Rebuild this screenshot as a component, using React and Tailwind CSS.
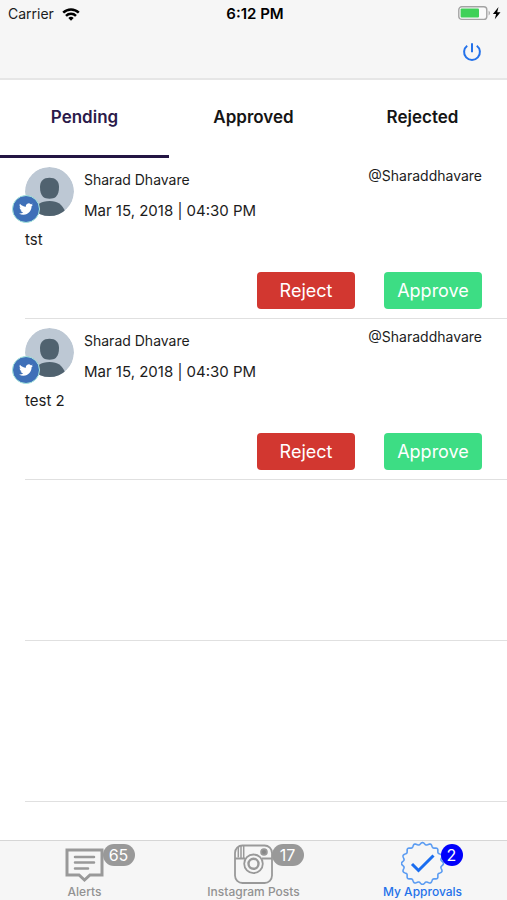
import { useState } from 'react';

const posts = [
  { id: 1, name: 'Sharad Dhavare', handle: '@Sharaddhavare', date: 'Mar 15, 2018 | 04:30 PM', text: 'tst' },
  { id: 2, name: 'Sharad Dhavare', handle: '@Sharaddhavare', date: 'Mar 15, 2018 | 04:30 PM', text: 'test 2' },
];

const tabs = ['Pending', 'Approved', 'Rejected'];

// Outline of the seal: a circle whose radius ripples sixteen times.
const sealPath =
  Array.from({ length: 192 }, (_, i) => {
    const a = (i / 192) * Math.PI * 2 - Math.PI / 2;
    const r = 19.9 + 1.1 * Math.cos((i / 192) * Math.PI * 32);
    return `${i ? 'L' : 'M'}${(21.5 + r * Math.cos(a)).toFixed(2)} ${(22.5 + r * Math.sin(a)).toFixed(2)}`;
  }).join('') + 'Z';

function WifiIcon() {
  return (
    <svg viewBox="0 0 18 13" className="h-[13px] w-[18px]" fill="none" stroke="#000" strokeWidth="2.5" aria-hidden="true">
      <path d="M1.2 4.7a11.2 11.2 0 0 1 15.6 0" />
      <path d="M4 7.8a7.2 7.2 0 0 1 10 0" />
      <path d="M9 12.8 6.3 10a3.9 3.9 0 0 1 5.4 0z" fill="#000" stroke="none" />
    </svg>
  );
}

function BatteryIcon() {
  return (
    <svg viewBox="0 0 44 16" className="h-4 w-11" aria-hidden="true">
      <rect x="0.8" y="0.8" width="28" height="12.6" rx="3" fill="#fafafa" stroke="#a3a3a3" strokeWidth="1.4" />
      <rect x="2.600" y="2.600" width="18.400" height="9" rx="1" fill="#3fd158" />
      <path d="M30.6 4.8c1.7.6 1.7 4 0 4.6z" fill="#a3a3a3" />
      <path d="M40.500 1 34.900 8h3.200l-1.300 5.200 5.700-7h-3.300z" fill="#000" />
    </svg>
  );
}

function PowerIcon() {
  return (
    <svg viewBox="0 0 20 20" className="size-5" fill="none" stroke="#2472ea" strokeWidth="2" aria-hidden="true">
      <path d="M10 1.200v9" />
      <path d="M5.200 3.800a7.900 7.900 0 1 0 9.600 0" />
    </svg>
  );
}

function Avatar() {
  return (
    <div className="relative size-[49px] shrink-0">
      <svg viewBox="0 0 49 49" className="size-[49px] rounded-full" aria-hidden="true">
        <circle cx="24.5" cy="24.5" r="24.5" fill="#bdc8d4" />
        <path d="M24.500 10.700c6 0 9.500 3.300 9.500 9.300 0 4-.7 7.500-3 9.800-1.600 1.400-3.800 1.900-6.500 1.900s-4.900-.5-6.500-1.900c-2.300-2.300-3-5.800-3-9.800 0-6 3.500-9.300 9.500-9.300z" fill="#50626f" />
        <path d="M9 45c1.500-7.500 7-11 15.700-11 8.300 0 12.300 3.500 15.300 10-4 7-26.500 8-31 1z" fill="#50626f" />
      </svg>
      <span className="absolute -bottom-[7px] -left-[13px] flex size-[28px] items-center justify-center rounded-full border border-[#a5e6dc] bg-[#3f70b8]">
        <svg viewBox="0 0 24 24" className="size-[14px]" fill="#fff" aria-label="Twitter">
          <path d="M23.95 4.57a10 10 0 0 1-2.820.780 4.960 4.960 0 0 0 2.160-2.720c-.950.560-2 .960-3.120 1.180a4.920 4.920 0 0 0-8.380 4.480C7.690 8.100 4.070 6.130 1.640 3.160a4.820 4.820 0 0 0-.670 2.480c0 1.710.870 3.210 2.190 4.100a4.900 4.900 0 0 1-2.230-.620v.060a4.920 4.920 0 0 0 3.950 4.830 5 5 0 0 1-2.210.080 4.940 4.940 0 0 0 4.600 3.420A9.870 9.870 0 0 1 0 19.540a14 14 0 0 0 7.550 2.210c9.050 0 14-7.500 14-13.990 0-.210 0-.420-.020-.630a9.940 9.940 0 0 0 2.460-2.550z" />
        </svg>
      </span>
    </div>
  );
}

function PostRow({ post }) {
  return (
    <li className="ml-[25px] flex h-[161px] flex-col border-b border-[#e0e0e0] pt-[9px] pr-[25px]">
      <div className="flex">
        <Avatar />
        <div className="ml-2.5 flex flex-1 flex-col gap-[11px] pt-[3px] leading-5">
          <p className="text-sm">{post.name}</p>
          <p className="text-[15px]">{post.date}</p>
        </div>
        <p className="text-sm leading-[18px]">{post.handle}</p>
      </div>
      <p className="mt-[9px] text-[15px] leading-5">{post.text}</p>
      <div className="mt-[22px] flex justify-end gap-[29px] text-lg text-white">
        <button type="button" className="h-[37px] w-[98px] rounded bg-[#d23730]">Reject</button>
        <button type="button" className="h-[37px] w-[98px] rounded bg-[#3ddd84]">Approve</button>
      </div>
    </li>
  );
}

function AlertsIcon() {
  return (
    <svg viewBox="0 0 44 44" className="size-11" fill="none" stroke="#999" aria-hidden="true">
      <path d="M4 9h35v25h-12l-5.500 5-5.500-5H4z" strokeWidth="3" />
      <path d="M12 16h19M12 21.500h19M12 27.500h13" strokeWidth="2.500" strokeLinecap="round" />
    </svg>
  );
}

function InstagramIcon() {
  return (
    <svg viewBox="0 0 44 44" className="size-11" fill="none" stroke="#999" strokeWidth="1.800" aria-hidden="true">
      <rect x="3" y="4.500" width="37" height="37.500" rx="7.500" />
      <path d="M3 17.500h10.200M29.800 17.500H40" />
      <path d="M6.300 6v10.500M9 5v12M11.700 5v12" strokeWidth="1.500" />
      <circle cx="32" cy="11" r="2.900" fill="#888" />
      <circle cx="21.500" cy="22.800" r="9.300" />
      <circle cx="21.500" cy="22.800" r="5" strokeWidth="2.400" />
    </svg>
  );
}

function ApprovalsIcon() {
  return (
    <svg viewBox="0 0 44 44" className="size-11" fill="none" aria-hidden="true">
      <path d={sealPath} stroke="#5b9cf2" strokeWidth="1.600" strokeLinejoin="round" />
      <path d="M11 23l6.500 6.500 15-15" stroke="#1a6df0" strokeWidth="3" />
    </svg>
  );
}

const navItems = [
  { label: 'Alerts', count: 65, Icon: AlertsIcon },
  { label: 'Instagram Posts', count: 17, Icon: InstagramIcon },
  { label: 'My Approvals', count: 2, Icon: ApprovalsIcon, active: true },
];

export default function App() {
  const [tab, setTab] = useState('Pending');
  return (
    <div className="flex min-h-screen flex-col bg-white font-['Inter','Liberation_Sans',sans-serif] text-[#1c1c1c]">
      <header className="h-20 border-b-2 border-[#e6e6e6] bg-[#f6f6f6]">
        <div className="grid h-7 grid-cols-3 items-center pr-[5px] pl-2 text-sm">
          <div className="flex items-center gap-2">
            <span>Carrier</span>
            <WifiIcon />
          </div>
          <span className="text-center text-[15px] font-semibold text-black">6:12 PM</span>
          <div className="flex justify-end">
            <BatteryIcon />
          </div>
        </div>
        <div className="flex h-12 items-center justify-end pr-[25px]">
          <button type="button" aria-label="Log out">
            <PowerIcon />
          </button>
        </div>
      </header>

      <div role="tablist" className="grid h-[78px] grid-cols-3">
        {tabs.map((name) => (
          <button
            key={name}
            type="button"
            role="tab"
            aria-selected={tab === name}
            onClick={() => setTab(name)}
            className={`border-b-3 text-[17px] font-semibold ${tab === name ? 'border-[#231543] text-[#2b1a4a]' : 'border-transparent text-[#151515]'}`}
          >
            {name}
          </button>
        ))}
      </div>

      <ul className="flex-1">
        {posts.map((post) => (
          <PostRow key={post.id} post={post} />
        ))}
        <li className="ml-[25px] h-[161px] border-b border-[#e0e0e0]" />
        <li className="ml-[25px] h-[161px] border-b border-[#e0e0e0]" />
      </ul>

      <nav className="grid h-[60px] grid-cols-3 border-t border-[#d6d6d6] bg-[#f6f6f6]">
        {navItems.map(({ label, count, Icon, active }) => (
          <a key={label} href="#" className={`flex flex-col items-center text-xs leading-[14px] font-medium ${active ? 'text-[#2472ea]' : 'text-[#929292]'}`}>
            <span className="relative">
              <Icon />
              <span className={`absolute top-[3px] left-10 flex h-[22px] items-center justify-center rounded-full text-base font-normal text-white ${active ? 'w-[22px] bg-[#0000fb]' : 'w-8 bg-[#999]'}`}>
                {count}
              </span>
            </span>
            {label}
          </a>
        ))}
      </nav>
    </div>
  );
}
